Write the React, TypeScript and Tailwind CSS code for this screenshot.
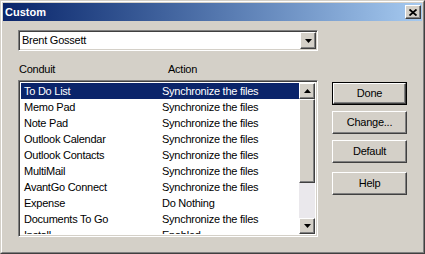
const raised =
  'border border-t-white border-l-white border-r-[#404040] border-b-[#404040] shadow-[inset_-1px_-1px_0_#808080]';
const sunken =
  'border border-t-[#808080] border-l-[#808080] border-r-white border-b-white shadow-[inset_1px_1px_0_#404040,inset_-1px_-1px_0_#d4d0c8]';

const rows = [
  ['To Do List', 'Synchronize the files'],
  ['Memo Pad', 'Synchronize the files'],
  ['Note Pad', 'Synchronize the files'],
  ['Outlook Calendar', 'Synchronize the files'],
  ['Outlook Contacts', 'Synchronize the files'],
  ['MultiMail', 'Synchronize the files'],
  ['AvantGo Connect', 'Synchronize the files'],
  ['Expense', 'Do Nothing'],
  ['Documents To Go', 'Synchronize the files'],
  ['Install', 'Enabled'],
];

function Arrow({ up }: { up?: boolean }) {
  return (
    <svg width="7" height="4" viewBox="0 0 7 4">
      <path d={up ? 'M3.5 0 L7 4 L0 4 Z' : 'M0 0 L7 0 L3.5 4 Z'} fill="#000" />
    </svg>
  );
}

function Button({ label, isDefault }: { label: string; isDefault?: boolean }) {
  const inner = (
    <div className={`flex-1 flex items-center justify-center ${raised}`}>
      <span>{label}</span>
    </div>
  );
  return isDefault ? (
    <div className="w-[75px] h-[23px] flex border border-black">{inner}</div>
  ) : (
    <div className="w-[75px] h-[23px] flex">{inner}</div>
  );
}

export default function App() {
  return (
    <div
      className="w-[425px] h-[254px] bg-[#d4d0c8] text-[11px] tracking-[-0.25px] text-black border border-t-[#d4d0c8] border-l-[#d4d0c8] border-r-[#404040] border-b-[#404040]"
      style={{ fontFamily: '"Liberation Sans", Arial, sans-serif' }}
    >
      <div className="h-full flex flex-col p-px border border-t-white border-l-white border-r-[#808080] border-b-[#808080]">
        {/* Title bar */}
        <div className="h-[18px] shrink-0 flex items-center pl-[2px] pr-[1px] bg-gradient-to-r from-[#0a246a] to-[#a6caf0]">
          <span className="flex-1 text-white font-bold tracking-normal leading-none">Custom</span>
          <div className={`w-[16px] h-[14px] flex items-center justify-center bg-[#d4d0c8] ${raised}`}>
            <svg width="8" height="7" viewBox="0 0 8 7">
              <path d="M0.5 0.5 L7.5 6.5 M7.5 0.5 L0.5 6.5" stroke="#000" strokeWidth="1.8" />
            </svg>
          </div>
        </div>

        <div className="flex pl-[15px] pt-[9px]">
          {/* Left column */}
          <div className="w-[300px] flex flex-col">
            <div className={`h-[21px] flex items-center bg-white ${sunken}`}>
              <span className="flex-1 pl-[3px]">Brent Gossett</span>
              <div className={`w-[16px] h-[17px] mr-px flex items-center justify-center bg-[#d4d0c8] ${raised}`}>
                <Arrow />
              </div>
            </div>

            <div className="flex h-[29px] items-end pb-[3px] pl-px">
              <span className="w-[149px]">Conduit</span>
              <span>Action</span>
            </div>

            <div className={`h-[157px] flex bg-white p-[2px] ${sunken}`}>
              <div className="flex-1 overflow-hidden">
                {rows.map(([name, action], i) => (
                  <div
                    key={name}
                    className={`h-[16px] shrink-0 flex items-center pl-[3px] ${i === 0 ? 'bg-[#0a246a] text-white' : ''}`}
                  >
                    <span className="w-[138px]">{name}</span>
                    <span>{action}</span>
                  </div>
                ))}
              </div>
              <div className="w-[16px] flex flex-col bg-[#eae8ec]">
                <div className={`h-[16px] flex items-center justify-center bg-[#d4d0c8] ${raised}`}>
                  <Arrow up />
                </div>
                <div className={`h-[84px] bg-[#d4d0c8] ${raised}`} />
                <div className="flex-1" />
                <div className={`h-[16px] flex items-center justify-center bg-[#d4d0c8] ${raised}`}>
                  <Arrow />
                </div>
              </div>
            </div>
          </div>

          {/* Buttons */}
          <div className="flex flex-col pl-[14px] pt-[52px] gap-[6px]">
            <Button label="Done" isDefault />
            <Button label="Change..." />
            <Button label="Default" />
            <div className="mt-[3px]">
              <Button label="Help" />
            </div>
          </div>
        </div>
      </div>
    </div>
  );
}
